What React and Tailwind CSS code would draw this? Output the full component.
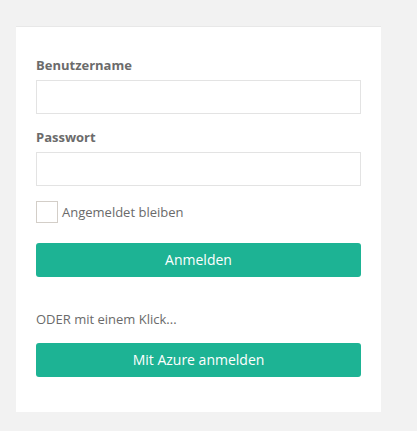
export default function App() {
  return (
    <div className="min-h-[431px] bg-[#f2f2f2] pl-4 pt-[26px] font-['Open_Sans',sans-serif]">
      <div className="w-[365px] border-t border-[#e8e8e8] bg-white px-5 pb-[35px] pt-[29px]">
        <label className="mb-[6px] block text-[13px] font-bold leading-[18px] text-[#6b6b6b]">
          Benutzername
        </label>
        <input
          type="text"
          className="mb-[14px] block h-[34px] w-full border border-[#e3e3e3] bg-white px-2 text-[13px] outline-none"
        />
        <label className="mb-[6px] block text-[13px] font-bold leading-[18px] text-[#6b6b6b]">
          Passwort
        </label>
        <input
          type="password"
          className="block h-[34px] w-full border border-[#e3e3e3] bg-white px-2 text-[13px] outline-none"
        />
        <div className="mt-[15px] flex items-center gap-[4px]">
          <span className="block h-[22px] w-[22px] border border-[#d3cec8] bg-white" />
          <span className="text-[13px] leading-[18px] text-[#6a6a6a]">Angemeldet bleiben</span>
        </div>
        <button className="mt-[20px] block h-[34px] w-full rounded-[3px] bg-[#1db394] text-[14px] font-medium leading-[20px] text-white">
          Anmelden
        </button>
        <p className="mt-[33px] text-[13px] leading-[18px] text-[#6a6a6a]">ODER mit einem Klick...</p>
        <button className="mt-[15px] block h-[34px] w-full rounded-[3px] bg-[#1db394] text-[14px] font-medium leading-[20px] text-white">
          Mit Azure anmelden
        </button>
      </div>
    </div>
  );
}
